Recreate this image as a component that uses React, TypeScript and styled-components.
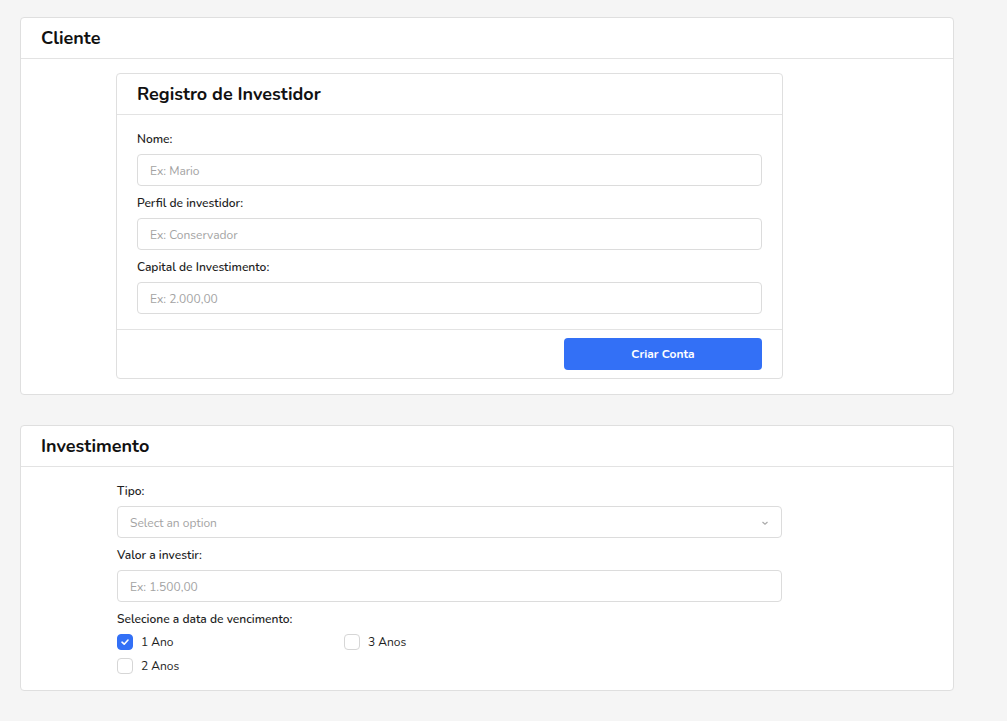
import React, { useState } from "react";
import styled, { createGlobalStyle } from "styled-components";

const Global = createGlobalStyle`
  html, body { margin: 0; padding: 0; background: #f5f5f5; }
  body { font-family: "Nunito", "Lato", "Noto Sans", sans-serif; color: #1f1f1f; }
  * { box-sizing: border-box; }
`;

const Page = styled.div`
  padding: 17px 0 30px 20px;
  display: flex;
  flex-direction: column;
  gap: 30px;
  width: 954px;
`;

const Card = styled.section`
  background: #fff;
  border: 1px solid #dfdfdf;
  border-radius: 4px;
`;

const CardHeader = styled.div<{ $size?: number }>`
  height: 41px;
  padding: 0 20px;
  display: flex;
  align-items: center;
  border-bottom: 1px solid #e3e3e3;
  font-size: ${(p) => p.$size ?? 18}px;
  font-weight: 700;
  color: #111;
`;

const OuterBody = styled.div`
  padding: 14px 0 15px 95px;
`;

const InnerCard = styled(Card)`
  width: 667px;
`;

const FormBody = styled.div`
  padding: 15px 20px 15px 20px;
  display: flex;
  flex-direction: column;
  gap: 8px;
`;

const Field = styled.div`
  display: flex;
  flex-direction: column;
  gap: 7px;
`;

const Label = styled.label`
  font-size: 12px;
  line-height: 18px;
  margin-bottom: -1px;
  font-weight: 600;
  color: #1f1f1f;
`;

const Input = styled.input`
  height: 32px;
  width: 100%;
  border: 1px solid #dcdcdc;
  border-radius: 4px;
  padding: 1px 12px 0;
  font-family: inherit;
  font-size: 12px;
  color: #333;
  outline: none;
  &::placeholder { color: #a3a3a3; }
`;

const SelectBox = styled.div`
  height: 32px;
  border: 1px solid #dcdcdc;
  border-radius: 4px;
  padding: 1px 12px 0;
  display: flex;
  align-items: center;
  justify-content: space-between;
  font-size: 12px;
  color: #a3a3a3;
`;

const Footer = styled.div`
  border-top: 1px solid #e3e3e3;
  padding: 8px 20px 8px 20px;
  display: flex;
  justify-content: flex-end;
`;

const Button = styled.button`
  width: 198px;
  height: 32px;
  border: none;
  border-radius: 4px;
  background: #3370f6;
  color: #fff;
  font-family: inherit;
  font-size: 12px;
  font-weight: 700;
  cursor: pointer;
`;

const InvestBody = styled.div`
  padding: 15px 0 12px 96px;
  width: 761px;
  display: flex;
  flex-direction: column;
  gap: 8px;
`;

const CheckGrid = styled.div`
  display: grid;
  grid-template-columns: 227px 227px;
  grid-auto-flow: column;
  grid-template-rows: 24px 24px;
  margin-top: -4px;
`;

const CheckItem = styled.label`
  display: flex;
  align-items: center;
  gap: 8px;
  font-size: 12px;
  color: #1f1f1f;
  cursor: pointer;
`;

const Box = styled.span<{ $on: boolean }>`
  width: 16px;
  height: 16px;
  border-radius: 4px;
  border: 1px solid ${(p) => (p.$on ? "#3370f6" : "#d6d6d6")};
  background: ${(p) => (p.$on ? "#3370f6" : "#fff")};
  display: flex;
  align-items: center;
  justify-content: center;
`;

const Check = ({ label, on, onClick }: { label: string; on: boolean; onClick: () => void }) => (
  <CheckItem onClick={onClick}>
    <Box $on={on}>
      {on && (
        <svg width="10" height="10" viewBox="0 0 10 10">
          <path d="M2 5.2 L4.2 7.2 L8 3" stroke="#fff" strokeWidth="1.6" fill="none" strokeLinecap="round" strokeLinejoin="round" />
        </svg>
      )}
    </Box>
    {label}
  </CheckItem>
);

export default function App() {
  const [checks, setChecks] = useState<Record<string, boolean>>({ "1 Ano": true, "2 Anos": false, "3 Anos": false });
  const toggle = (k: string) => setChecks((c) => ({ ...c, [k]: !c[k] }));
  return (
    <>
      <Global />
      <Page>
        <Card>
          <CardHeader>Cliente</CardHeader>
          <OuterBody>
            <InnerCard>
              <CardHeader $size={18}>Registro de Investidor</CardHeader>
              <FormBody>
                <Field>
                  <Label>Nome:</Label>
                  <Input placeholder="Ex: Mario" />
                </Field>
                <Field>
                  <Label>Perfil de investidor:</Label>
                  <Input placeholder="Ex: Conservador" />
                </Field>
                <Field>
                  <Label>Capital de Investimento:</Label>
                  <Input placeholder="Ex: 2.000,00" />
                </Field>
              </FormBody>
              <Footer>
                <Button>Criar Conta</Button>
              </Footer>
            </InnerCard>
          </OuterBody>
        </Card>
        <Card>
          <CardHeader>Investimento</CardHeader>
          <InvestBody>
            <Field>
              <Label>Tipo:</Label>
              <SelectBox>
                Select an option
                <svg width="8" height="6" viewBox="0 0 8 6">
                  <path d="M1.5 2 L4 4.3 L6.5 2" stroke="#aaa" strokeWidth="1.2" fill="none" />
                </svg>
              </SelectBox>
            </Field>
            <Field>
              <Label>Valor a investir:</Label>
              <Input placeholder="Ex: 1.500,00" />
            </Field>
            <Field>
              <Label>Selecione a data de vencimento:</Label>
              <CheckGrid>
                <Check label="1 Ano" on={checks["1 Ano"]} onClick={() => toggle("1 Ano")} />
                <Check label="2 Anos" on={checks["2 Anos"]} onClick={() => toggle("2 Anos")} />
                <Check label="3 Anos" on={checks["3 Anos"]} onClick={() => toggle("3 Anos")} />
              </CheckGrid>
            </Field>
          </InvestBody>
        </Card>
      </Page>
    </>
  );
}
